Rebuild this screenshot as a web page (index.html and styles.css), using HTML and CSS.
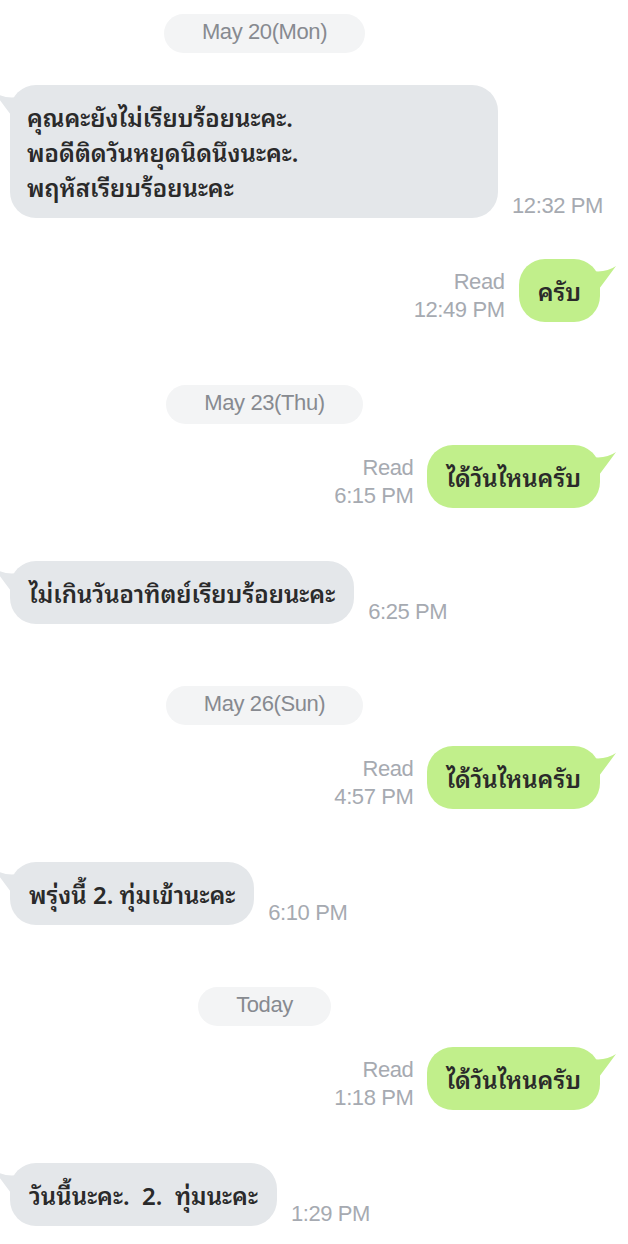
FILE: index.html
```html
<!DOCTYPE html>
<html>
<head>
    <meta charset="UTF-8">
    <meta name="viewport" content="width=device-width, initial-scale=1.0">
    <title>Chat</title>
    <link rel="stylesheet" href="styles.css">
</head>
<body>
    <div class="chat">
        <div class="date-row first"><div class="date">May 20(Mon)</div></div>

        <div class="row in">
            <div class="bubble wide">
                <svg class="tail" viewBox="0 0 30 34"><path d="M4,12 Q18,14 28,7 Q20,18 11,30 L4,30 Z"/></svg>
                คุณคะยังไม่เรียบร้อยนะคะ.<br>พอดีติดวันหยุดนิดนึงนะคะ.<br>พฤหัสเรียบร้อยนะคะ
            </div>
            <div class="meta">12:32 PM</div>
        </div>

        <div class="row out">
            <div class="meta">Read<br>12:49 PM</div>
            <div class="bubble">
                <svg class="tail" viewBox="0 0 30 34"><path d="M4,12 Q18,14 28,7 Q20,18 11,30 L4,30 Z"/></svg>
                ครับ
            </div>
        </div>

        <div class="date-row"><div class="date">May 23(Thu)</div></div>

        <div class="row out">
            <div class="meta">Read<br>6:15 PM</div>
            <div class="bubble">
                <svg class="tail" viewBox="0 0 30 34"><path d="M4,12 Q18,14 28,7 Q20,18 11,30 L4,30 Z"/></svg>
                ได้วันไหนครับ
            </div>
        </div>

        <div class="row in">
            <div class="bubble">
                <svg class="tail" viewBox="0 0 30 34"><path d="M4,12 Q18,14 28,7 Q20,18 11,30 L4,30 Z"/></svg>
                ไม่เกินวันอาทิตย์เรียบร้อยนะคะ
            </div>
            <div class="meta">6:25 PM</div>
        </div>

        <div class="date-row"><div class="date">May 26(Sun)</div></div>

        <div class="row out">
            <div class="meta">Read<br>4:57 PM</div>
            <div class="bubble">
                <svg class="tail" viewBox="0 0 30 34"><path d="M4,12 Q18,14 28,7 Q20,18 11,30 L4,30 Z"/></svg>
                ได้วันไหนครับ
            </div>
        </div>

        <div class="row in">
            <div class="bubble">
                <svg class="tail" viewBox="0 0 30 34"><path d="M4,12 Q18,14 28,7 Q20,18 11,30 L4,30 Z"/></svg>
                พรุ่งนี้ 2. ทุ่มเข้านะคะ
            </div>
            <div class="meta">6:10 PM</div>
        </div>

        <div class="date-row"><div class="date">Today</div></div>

        <div class="row out">
            <div class="meta">Read<br>1:18 PM</div>
            <div class="bubble">
                <svg class="tail" viewBox="0 0 30 34"><path d="M4,12 Q18,14 28,7 Q20,18 11,30 L4,30 Z"/></svg>
                ได้วันไหนครับ
            </div>
        </div>

        <div class="row in">
            <div class="bubble">
                <svg class="tail" viewBox="0 0 30 34"><path d="M4,12 Q18,14 28,7 Q20,18 11,30 L4,30 Z"/></svg>
                วันนี้นะคะ.&nbsp; 2.&nbsp; ทุ่มนะคะ
            </div>
            <div class="meta">1:29 PM</div>
        </div>
    </div>
</body>
</html>
```

FILE: styles.css
```css
* {
    margin: 0;
    padding: 0;
    box-sizing: border-box;
}

body {
    background-color: #ffffff;
    font-family: "Liberation Sans", Arial, sans-serif;
    overflow: hidden;
}

.chat {
    display: flex;
    flex-direction: column;
    padding: 14px 28px 0 10px;
}

/* date separators */
.date-row {
    display: flex;
    justify-content: center;
    padding-right: 81px;
    margin-top: 42px;
}

.date-row.first {
    margin-top: 0;
}

.date {
    height: 39px;
    line-height: 35px;
    padding: 0 38px;
    border-radius: 20px;
    background-color: #f3f4f5;
    color: #878a90;
    font-size: 22px;
    letter-spacing: -0.4px;
}

/* message rows */
.row {
    display: flex;
    align-items: flex-end;
    gap: 14px;
    margin-top: 21px;
}

.row.in {
    justify-content: flex-start;
    padding-top: 11px;
    padding-bottom: 20px;
}

.row.out {
    justify-content: flex-end;
    padding-bottom: 21px;
}

.bubble {
    position: relative;
    flex-shrink: 0;
    padding: 14px 19px;
    border-radius: 26px;
    font-family: "Noto Sans Thai Looped", "Loma", "Garuda", "Noto Sans Thai", "Noto Sans", sans-serif;
    font-size: 24px;
    font-weight: 600;
    line-height: 35px;
    color: #2a2a2a;
    white-space: nowrap;
}

.row.in .bubble {
    background-color: #e4e7ea;
}

.row.out .bubble {
    background-color: #c1ef8b;
}

.bubble.wide {
    width: 488px;
    padding-left: 17px;
}

.tail {
    position: absolute;
    top: 0;
    width: 30px;
    height: 34px;
}

.row.out .tail {
    right: -18px;
    fill: #c1ef8b;
}

.row.in .tail {
    left: -18px;
    transform: scaleX(-1);
    fill: #e4e7ea;
}

.meta {
    flex-shrink: 0;
    white-space: nowrap;
    color: #a6aab1;
    font-size: 22px;
    line-height: 28px;
    letter-spacing: -0.4px;
    margin-bottom: -2px;
}

.row.out .meta {
    text-align: right;
}
```
